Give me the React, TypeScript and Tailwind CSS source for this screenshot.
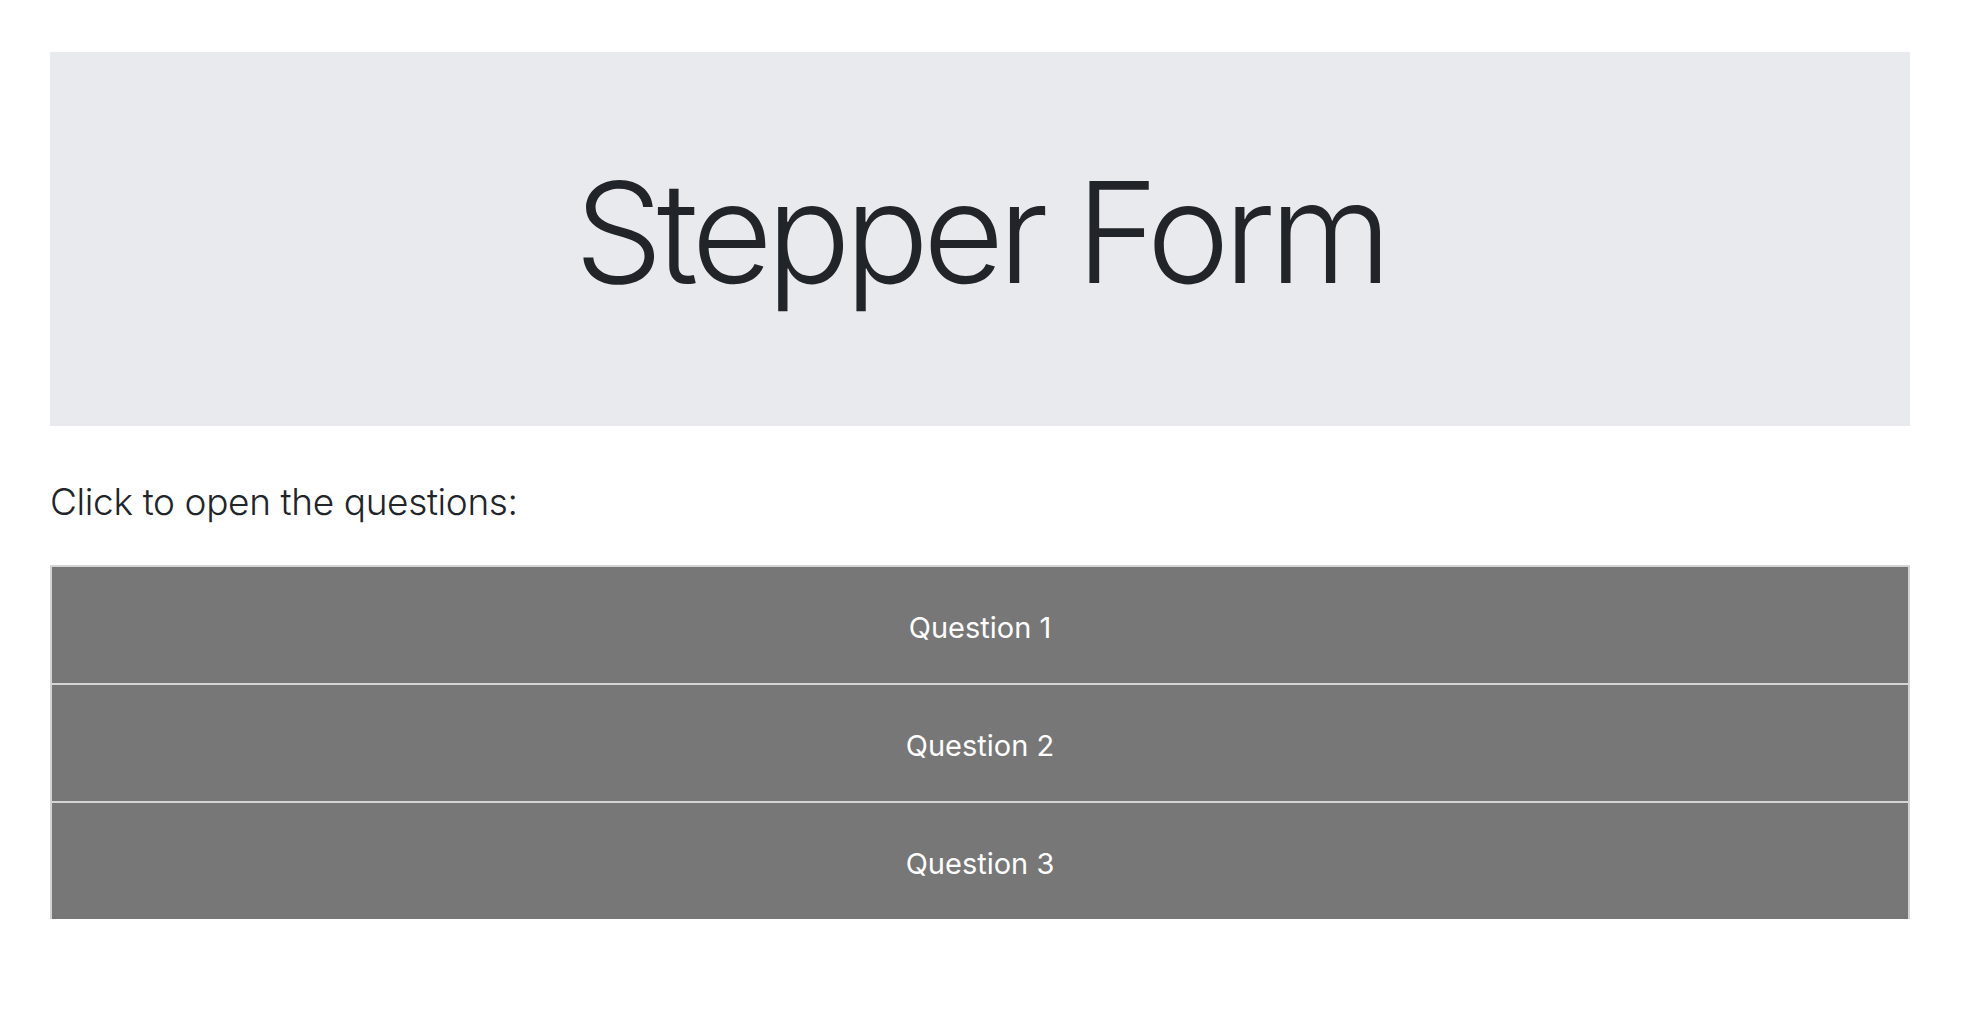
import { useState } from "react";

const questions = ["Question 1", "Question 2", "Question 3"];

export default function App() {
  const [open, setOpen] = useState<number | null>(null);

  return (
    <div
      className="min-h-screen bg-white pl-[50px] pr-[68px] pt-[52px] text-[#212529]"
      style={{ fontFamily: '"Inter", "Roboto", "Liberation Sans", sans-serif' }}
    >
      {/* Jumbotron */}
      <div className="flex h-[374px] items-center justify-center bg-[#e9eaee]">
        <h1 className="pb-[14px] text-[140px] font-light leading-none tracking-[-0.043em]">Stepper Form</h1>
      </div>

      <p className="mt-[47px] text-[37px] font-light leading-[57px] tracking-[-0.01em]">Click to open the questions:</p>

      {/* Accordion */}
      <div className="mt-[35px] border-2 border-b-0 border-[#d4d4d4]">
        {questions.map((q, i) => (
          <div key={i} className={i > 0 ? "border-t-2 border-[#d4d4d4]" : ""}>
            <button
              onClick={() => setOpen(open === i ? null : i)}
              className="flex h-[116px] w-full cursor-pointer items-center justify-center bg-[#777777] pt-[5px] text-[29px] text-white"
            >
              {q}
            </button>
          </div>
        ))}
      </div>
    </div>
  );
}
